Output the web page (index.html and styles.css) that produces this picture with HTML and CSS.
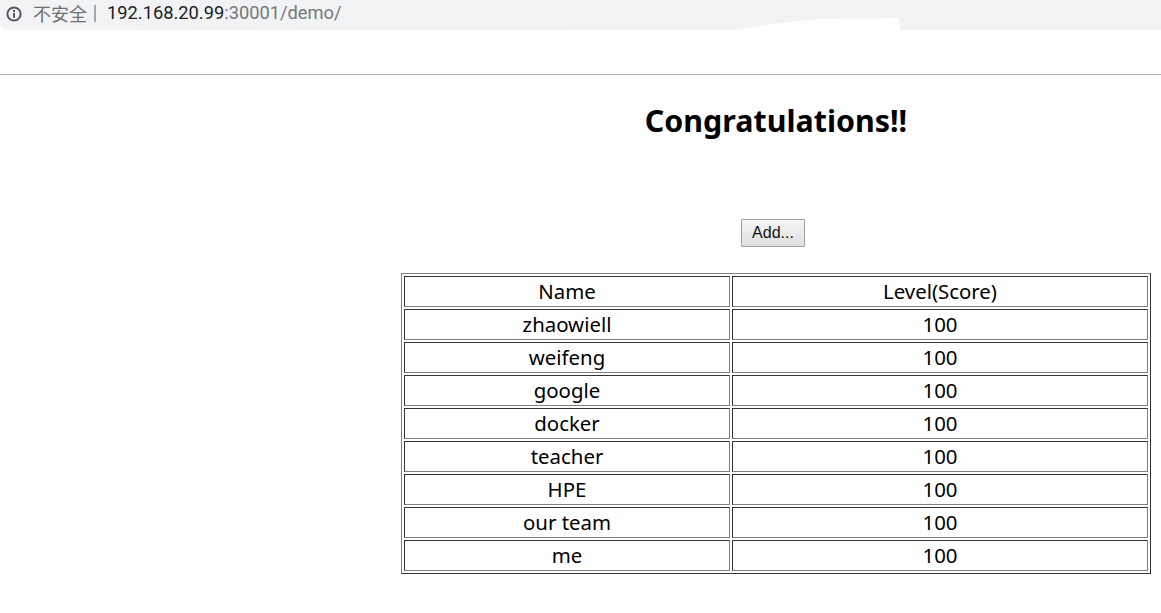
FILE: index.html
```html
<!DOCTYPE html>
<html lang="zh">
<head>
<meta charset="utf-8">
<title>demo</title>
<link rel="stylesheet" href="styles.css">
</head>
<body>
<header class="browser">
  <div class="address">
    <svg class="info" width="16" height="16" viewBox="0 0 16 16" aria-hidden="true">
      <circle cx="8" cy="8" r="6.6" fill="none" stroke="#55585c" stroke-width="2"/>
      <rect x="7" y="7" width="2" height="4.8" fill="#55585c"/>
      <rect x="7" y="4" width="2" height="2" fill="#55585c"/>
    </svg>
    <span class="insecure">不安全</span>
    <span class="sep"></span>
    <span class="url"><span class="host">192.168.20.99</span>:30001/demo/</span>
  </div>
  <svg class="smear" width="175" height="14" viewBox="0 0 175 14" aria-hidden="true">
    <path d="M0 14 L32 9 L62 5 L90 3 L165 2 L167 7 L167 14 Z" fill="#fff"/>
  </svg>
</header>
<main class="page">
  <h1 class="title">Congratulations!!</h1>
  <div class="actions"><button class="add" type="button">Add...</button></div>
  <table class="scores">
    <tr><td class="name">Name</td><td>Level(Score)</td></tr>
    <tr><td class="name">zhaowiell</td><td>100</td></tr>
    <tr><td class="name">weifeng</td><td>100</td></tr>
    <tr><td class="name">google</td><td>100</td></tr>
    <tr><td class="name">docker</td><td>100</td></tr>
    <tr><td class="name">teacher</td><td>100</td></tr>
    <tr><td class="name">HPE</td><td>100</td></tr>
    <tr><td class="name">our team</td><td>100</td></tr>
    <tr><td class="name">me</td><td>100</td></tr>
  </table>
</main>
</body>
</html>
```
FILE: styles.css
```css
html, body {
  margin: 0;
  padding: 0;
  background: #fff;
}
body {
  font-family: "Noto Sans", "Noto Sans CJK SC", sans-serif;
  color: #000;
  overflow: hidden;
}
.browser {
  position: relative;
  height: 74px;
  border-bottom: 1px solid #b2b2b2;
}
.address {
  height: 30px;
  background: linear-gradient(90deg, #f1f3f5, #f2f2f2 60%);
  border-bottom-left-radius: 8px;
  display: flex;
  align-items: center;
  padding: 0 0 3px 6px;
  box-sizing: border-box;
}
.smear {
  position: absolute;
  left: 733px;
  top: 16px;
}
.info {
  flex: none;
}
.insecure {
  margin-left: 11px;
  font-size: 18px;
  color: #6e7175;
  font-family: "Noto Sans CJK SC", sans-serif;
  line-height: 20px;
  position: relative;
  top: -1px;
}
.sep {
  width: 2px;
  height: 17px;
  background: #a4a6a9;
  margin-left: 7px;
}
.url {
  margin-left: 11px;
  font-family: "Roboto", sans-serif;
  font-size: 18.3px;
  color: #74777b;
  line-height: 20px;
  position: relative;
  top: -1px;
}
.host {
  color: #202124;
}
.page {
  width: 750px;
  margin-left: 401px;
}
.title {
  margin: 0;
  padding-top: 25px;
  height: 119px;
  box-sizing: border-box;
  font-size: 30.4px;
  line-height: 42px;
  font-weight: 700;
  text-align: center;
}
.actions {
  display: flex;
  justify-content: center;
  padding: 25px 6px 26px 0;
}
.add {
  width: 64px;
  height: 28px;
  padding: 0;
  font-family: "Liberation Sans", Arial, sans-serif;
  font-size: 16px;
  color: #111;
  background: linear-gradient(#f6f6f6, #dedede);
  border: 1px solid #a0a0a0;
  border-radius: 1px;
}
.scores {
  width: 750px;
  border-spacing: 2px;
  border: 1px solid;
  border-color: #808080 #333 #333 #808080;
  table-layout: fixed;
}
.scores td {
  border: 1px solid;
  border-color: #333 #808080 #808080 #333;
  height: 31px;
  box-sizing: border-box;
  padding: 0;
  text-align: center;
  font-size: 20.4px;
  line-height: 29px;
}
.scores td.name {
  width: 326px;
}
```
